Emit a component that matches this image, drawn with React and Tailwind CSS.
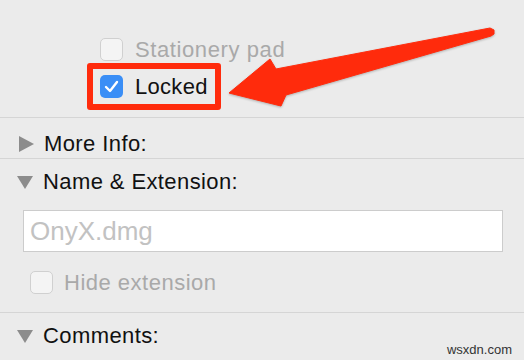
import React from 'react';

const FONT = { fontFamily: '"Liberation Sans", Arial, sans-serif' };

const Box = ({ checked = false }) =>
  checked ? (
    <span className="w-[23px] h-[23px] rounded-[5px] bg-[#3a8ef6] flex items-center justify-center shrink-0">
      <svg width="15" height="13" viewBox="0 0 15 13">
        <path d="M2 7 L6 11 L13 2" fill="none" stroke="#fff" strokeWidth="2.4" strokeLinecap="round" strokeLinejoin="round" />
      </svg>
    </span>
  ) : (
    <span className="w-[23px] h-[23px] rounded-[5px] bg-[#f4f4f4] border border-[#d0d0d0] shrink-0" />
  );

const Disclosure = ({ open, label }) => (
  <div className="flex items-center gap-[10px]">
    {open ? (
      <svg width="16" height="14" viewBox="0 0 16 14">
        <polygon points="0,1 16,1 8,14" fill="#8c8c8c" />
      </svg>
    ) : (
      <svg width="16" height="16" viewBox="0 0 16 16">
        <polygon points="1,0 16,8 1,16" fill="#8c8c8c" />
      </svg>
    )}
    <span className="text-[22px] text-[#111] leading-none tracking-[0.4px]">{label}</span>
  </div>
);

export default function App() {
  return (
    <div className="relative w-[524px] h-[360px] overflow-hidden bg-[#ebebeb]" style={FONT}>
      <div className="pt-[38px] pb-[7px] pl-[100px] border-b border-[#d5d5d5]">
        <div className="flex items-center gap-[12px] h-[23px]">
          <Box />
          <span className="text-[22px] leading-none text-[#a9a9a9] tracking-[0.6px]">Stationery pad</span>
        </div>
        <div className="mt-[2px] -ml-[13px] w-[134px] h-[47px] border-[6px] border-[#ff2b0c] rounded-[3px] flex items-center pl-[7px] gap-[12px]">
          <Box checked />
          <span className="text-[22px] leading-none text-[#111] tracking-[0.3px]">Locked</span>
        </div>
      </div>

      <div className="h-[41px] pl-[18px] pt-[15px] border-b border-[#d5d5d5]">
        <Disclosure label="More Info:" />
      </div>

      <div className="pl-[17px] pt-[12px] pb-[18px] border-b border-[#d5d5d5]">
        <Disclosure open label="Name & Extension:" />
        <div className="mt-[17px] ml-[6px] w-[480px] h-[42px] bg-white border border-[#cccccc] flex items-center pl-[6px]">
          <span className="text-[26px] leading-none text-[#c2c2c2]">OnyX.dmg</span>
        </div>
        <div className="mt-[19px] ml-[13px] flex items-center gap-[11px] h-[23px]">
          <Box />
          <span className="text-[22px] leading-none text-[#a9a9a9] tracking-[0.5px]">Hide extension</span>
        </div>
      </div>

      <div className="pl-[17px] pt-[12px]">
        <Disclosure open label="Comments:" />
      </div>

      <svg className="absolute inset-0 pointer-events-none" width="524" height="360" viewBox="0 0 524 360">
        <polygon
          points="229,93 270,59 276,69 490,28 494,30 494,34 491,36 286,95 281,106"
          fill="#ff2b0c"
          stroke="#ff2b0c"
          strokeWidth="1"
          strokeLinejoin="round"
          style={{ filter: 'drop-shadow(0px 1px 1px rgba(0,0,0,0.25))' }}
        />
      </svg>

      <span className="absolute right-[12px] bottom-[4px] text-[13px] leading-none text-[#333]">wsxdn.com</span>
    </div>
  );
}
